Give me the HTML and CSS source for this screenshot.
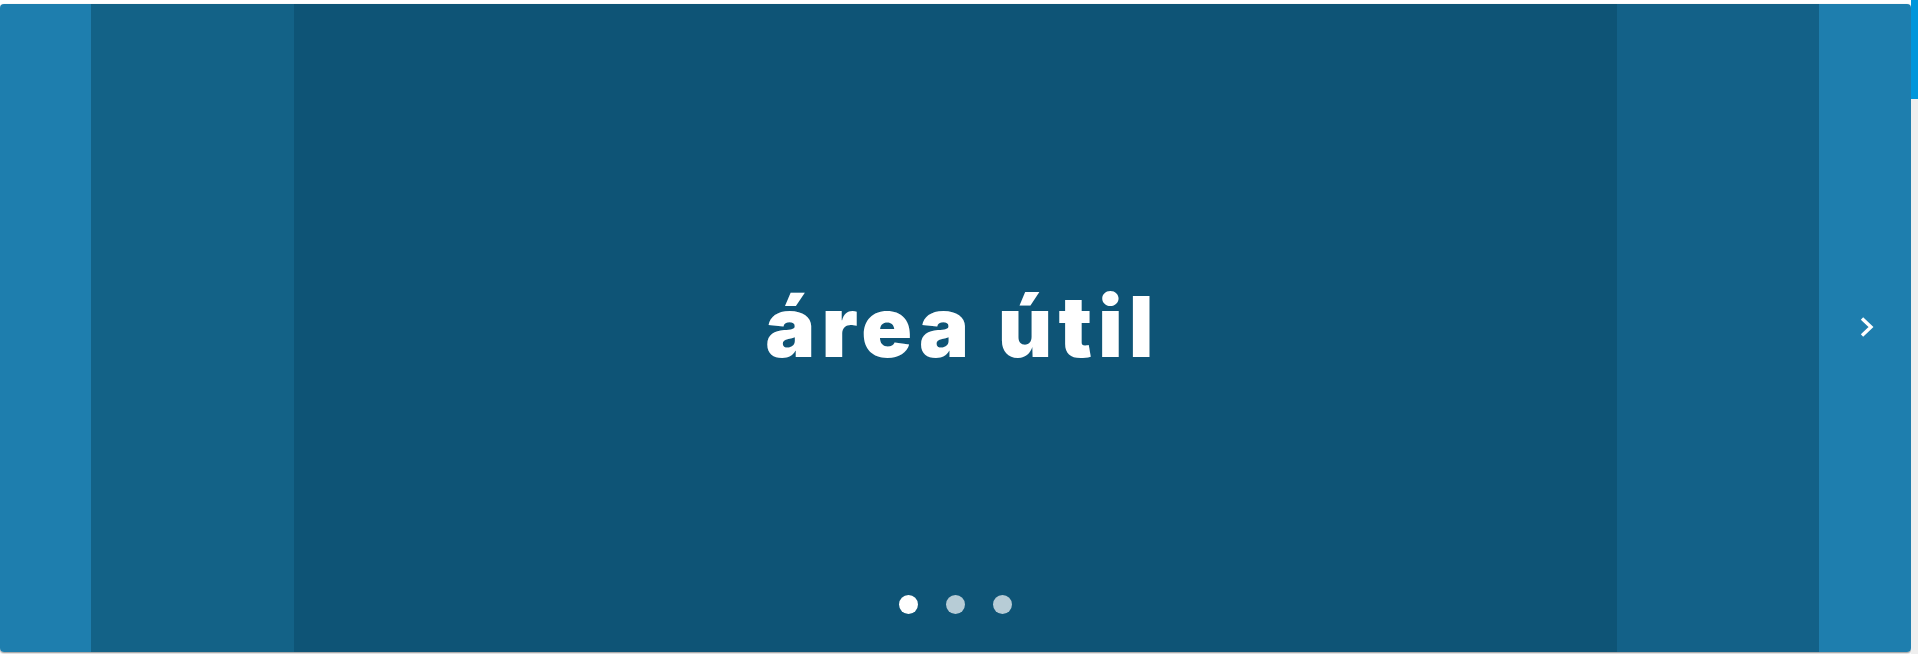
FILE: index.html
```html
<!DOCTYPE html>
<html lang="pt">
<head>
<meta charset="utf-8">
<title>Área útil</title>
<link rel="stylesheet" href="styles.css">
</head>
<body>
<div class="page">
  <section class="slider">
    <div class="panel panel-edge"></div>
    <div class="panel panel-peek"></div>
    <div class="panel panel-main">
      <h1 class="title">área útil</h1>
      <div class="dots">
        <span class="dot dot-active"></span>
        <span class="dot"></span>
        <span class="dot"></span>
      </div>
    </div>
    <div class="panel panel-peek panel-peek-right"></div>
    <div class="panel panel-edge panel-edge-right">
      <button class="next" aria-label="Próximo">
        <svg width="14" height="20" viewBox="0 0 14 20"><path d="M2 1.5 L11 10 L2 18.5" fill="none" stroke="#fff" stroke-width="3.4"/></svg>
      </button>
    </div>
  </section>
  <div class="scrollbar"><div class="thumb"></div></div>
</div>
</body>
</html>
```
FILE: styles.css
```css
html, body {
  margin: 0;
  padding: 0;
  background: #fff;
}
.page {
  display: flex;
  width: 1918px;
  height: 654px;
}
.slider {
  flex: 0 0 1911px;
  margin-top: 4px;
  height: 648px;
  display: flex;
  border-radius: 4px;
  overflow: hidden;
  box-shadow: 0 1px 2px rgba(0,0,0,0.45);
}
.panel {
  height: 100%;
}
.panel-edge {
  flex: 0 0 91px;
  background: #1e7eae;
}
.panel-edge-right {
  flex: 0 0 92px;
  display: flex;
  align-items: center;
  justify-content: center;
}
.panel-peek {
  flex: 0 0 203px;
  background: #136287;
}
.panel-peek-right {
  flex: 0 0 202px;
  background: #136188;
}
.panel-main {
  flex: 0 0 1323px;
  background: #0e5476;
  display: flex;
  flex-direction: column;
  align-items: center;
}
.title {
  margin: 0;
  padding-top: 281px;
  font-family: Inter, "Open Sans", sans-serif;
  font-weight: 900;
  font-size: 84px;
  line-height: 1;
  color: #fff;
  letter-spacing: 6px;
  padding-left: 14px;
}
.dots {
  margin-top: auto;
  margin-bottom: 38px;
  display: flex;
  gap: 28px;
}
.dot {
  width: 19px;
  height: 19px;
  border-radius: 50%;
  background: rgba(255,255,255,0.7);
}
.dot-active {
  background: #fff;
}
.next {
  border: 0;
  background: none;
  padding: 0;
  width: 14px;
  height: 20px;
  transform: translate(2px, -1px);
  cursor: pointer;
}
.next svg {
  display: block;
}
.scrollbar {
  flex: 0 0 7px;
  background: #efefef;
}
.thumb {
  height: 99px;
  background: #0096db;
}
```
